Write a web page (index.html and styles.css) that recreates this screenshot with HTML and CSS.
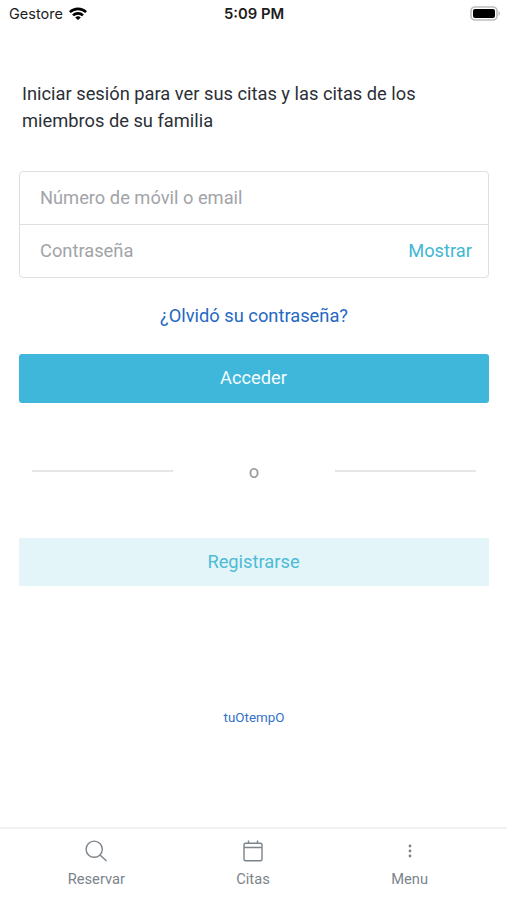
FILE: index.html
```html
<!DOCTYPE html>
<html lang="es">
<head>
<meta charset="utf-8">
<meta name="viewport" content="width=device-width">
<title>Iniciar sesión</title>
<link rel="stylesheet" href="styles.css">
</head>
<body>
<div class="screen">
  <header class="status">
    <div class="carrier"><span>Gestore</span>
      <svg class="wifi" viewBox="0 0 18 13"><path d="M0 4.2a13 13 0 0 1 18 0l-1.8 1.9a10.3 10.3 0 0 0-14.4 0zM3.1 7.4a8.5 8.5 0 0 1 11.8 0l-1.8 1.9a6 6 0 0 0-8.2 0zM6.2 10.5a4 4 0 0 1 5.6 0L9 13z"/></svg>
    </div>
    <time class="clock">5:09 PM</time>
    <svg class="battery" viewBox="0 0 31 15"><rect x="1" y="1" width="26" height="13" rx="4" fill="none" stroke="#bdbdbd" stroke-width="1.6"/><rect x="3" y="3" width="22" height="9" rx="2"/><path d="M28.5 5q3 2.5 0 5z" fill="#bdbdbd"/></svg>
  </header>
  <main class="content">
    <p class="intro">Iniciar sesión para ver sus citas y las citas de los miembros de su familia</p>
    <form class="fields">
      <div class="field"><span>Número de móvil o email</span></div>
      <div class="field"><span>Contraseña</span><a class="show">Mostrar</a></div>
    </form>
    <a class="forgot">¿Olvidó su contraseña?</a>
    <button class="button primary">Acceder</button>
    <div class="divider"><i></i><span>o</span><i></i></div>
    <button class="button secondary">Registrarse</button>
    <a class="brand">tuOtempO</a>
  </main>
  <nav class="tabs">
    <a class="tab"><svg viewBox="0 0 24 24"><circle cx="10.2" cy="10.2" r="8.1"/><path d="m16 16 6.5 6"/></svg><span>Reservar</span></a>
    <a class="tab"><svg viewBox="0 0 24 24"><rect x="3" y="4.2" width="18" height="17.6" rx="1.5"/><path d="M3 8.5h18M7.5 1.5v2.7M16.5 1.5v2.7"/></svg><span>Citas</span></a>
    <a class="tab"><svg class="dots" viewBox="0 0 24 24"><circle cx="12" cy="7" r="1.4"/><circle cx="12" cy="12" r="1.4"/><circle cx="12" cy="17" r="1.4"/></svg><span>Menu</span></a>
  </nav>
</div>
</body>
</html>
```
FILE: styles.css
```css
* { box-sizing: border-box; }
body { margin: 0; background: #fff; font-family: Roboto, sans-serif; color: #2b3036; }
.screen { width: 507px; height: 900px; display: flex; flex-direction: column; overflow: hidden; }
.status { height: 27px; padding: 0 6px 0 9px; display: grid; grid-template-columns: 1fr auto 1fr; align-items: center; font-family: Inter, sans-serif; color: #1c1c1c; }
.carrier { display: flex; align-items: center; gap: 6px; font-size: 14.5px; }
.wifi { width: 18px; height: 13px; margin-top: -1px; }
.clock { margin-right: 2px; font-size: 14.8px; font-weight: 600; }
.battery { width: 31px; height: 15px; justify-self: end; }
.content { flex: 1; padding: 53px 18px 0 19px; display: flex; flex-direction: column; }
.intro { margin: 0 3px; width: 420px; font-size: 18.3px; line-height: 27px; }
.fields { margin-top: 37px; height: 107px; border: 1px solid #dfdfdf; border-radius: 4px; }
.field { height: 52px; padding: 0 16px 2px 20px; display: flex; align-items: center; justify-content: space-between; color: #a1a4a8; font-size: 18.3px; }
.field + .field { height: 54px; border-top: 1px solid #dfdfdf; }
.show { color: #42b7d3; }
.forgot { margin-top: 27px; line-height: 22px; text-align: center; font-size: 18.3px; color: #2468c2; }
.button { padding: 0 1px 2px 0; border: 0; border-radius: 3px; font: 18.3px Roboto, sans-serif; }
.primary { margin-top: 27px; height: 49px; background: #3fb7da; color: #f3fcff; }
.divider { height: 135px; padding: 2px 13px 0 13px; display: flex; align-items: center; justify-content: space-between; font-size: 18.3px; color: #999; }
.divider i { width: 141px; height: 2px; margin-top: -1px; background: #e6e6e6; }
.secondary { height: 48px; border-radius: 1px; background: #e3f5f9; color: #4dbbd5; }
.brand { margin-top: 123px; text-align: center; font-size: 13.4px; line-height: 18px; color: #3471c8; }
.tabs { height: 73px; padding: 0 19px 0 18px; display: grid; grid-template-columns: repeat(3, 1fr); border-top: 2px solid #f1f1f1; }
.tab { display: flex; flex-direction: column; align-items: center; padding-top: 10px; font-size: 14.7px; line-height: 20px; color: #7b838b; }
.tab svg { width: 24px; height: 24px; margin-bottom: 6px; fill: none; stroke: #7b838b; stroke-width: 1.4; }
.tab .dots { fill: #7b838b; stroke: none; }
```
